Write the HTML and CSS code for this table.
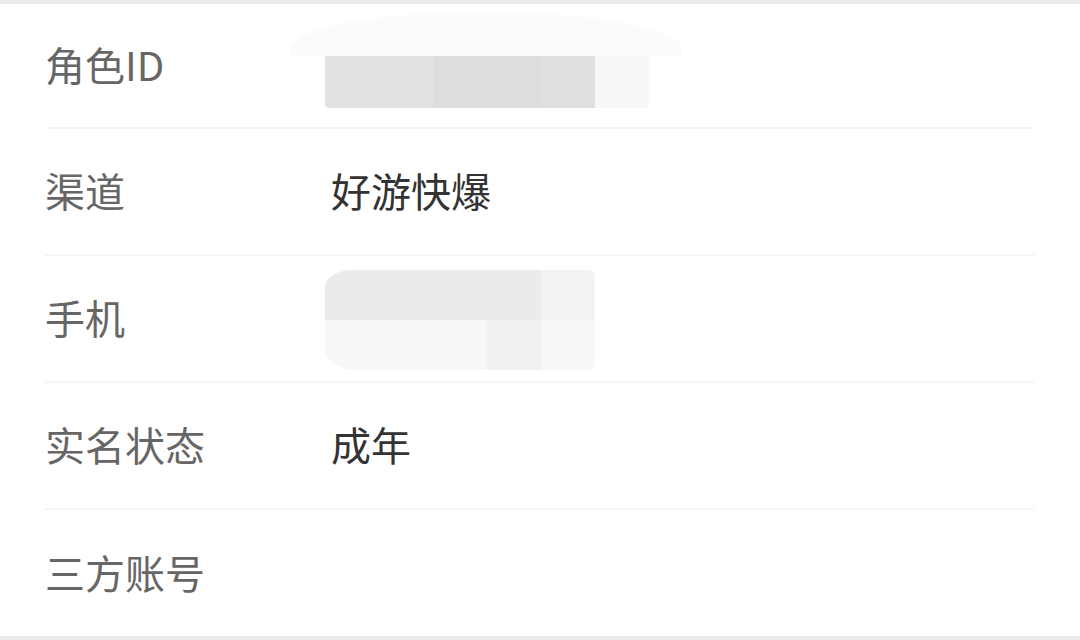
FILE: index.html
```html
<!DOCTYPE html>
<html lang="zh-CN">
<head>
    <meta charset="UTF-8">
    <meta name="viewport" content="width=device-width, initial-scale=1.0">
    <title>账号信息</title>
    <link rel="stylesheet" href="styles.css">
</head>
<body>
    <div class="page">
        <div class="list">
            <div class="row first">
                <div class="label">角色ID</div>
                <div class="value">
                    <div class="mask mask-id">
                        <div class="haze"></div>
                        <div class="cells">
                            <span class="c1"></span>
                            <span class="c2"></span>
                            <span class="c3"></span>
                            <span class="c4"></span>
                        </div>
                    </div>
                </div>
            </div>
            <div class="row">
                <div class="label">渠道</div>
                <div class="value">好游快爆</div>
            </div>
            <div class="row">
                <div class="label">手机</div>
                <div class="value">
                    <div class="mask mask-phone">
                        <div class="band top">
                            <span></span><span></span><span></span><span></span><span class="lite"></span>
                        </div>
                        <div class="band bottom">
                            <span></span><span></span><span></span><span class="dim"></span><span></span>
                        </div>
                    </div>
                </div>
            </div>
            <div class="row">
                <div class="label">实名状态</div>
                <div class="value">成年</div>
            </div>
            <div class="row last">
                <div class="label">三方账号</div>
                <div class="value"></div>
            </div>
        </div>
    </div>
</body>
</html>
```

FILE: styles.css
```css
html, body {
    margin: 0;
    padding: 0;
    background: #fff;
}
body {
    font-family: "Noto Sans CJK SC", "Noto Sans", sans-serif;
}
.page {
    height: 640px;
    box-sizing: border-box;
    border-top: 4px solid #ebebeb;
    border-bottom: 4px solid #ebebeb;
}
.list {
    margin: 0 46px 0 45px;
}
.row {
    display: flex;
    align-items: center;
    height: 125px;
    box-sizing: border-box;
    padding-bottom: 4px;
    border-bottom: 2px solid #f5f5f5;
}
.row {
    height: 127px;
}
.row.first {
    height: 125px;
}
.row.last {
    border-bottom: none;
}
.label {
    width: 286px;
    font-size: 40px;
    line-height: 1;
    color: #666;
}
.value {
    font-size: 40px;
    line-height: 1;
    color: #333;
}

/* blurred-out values */
.mask {
    position: relative;
    margin-left: -6px;
}
.mask-id {
    width: 324px;
    height: 52px;
    margin-top: 37px;
}
.mask-id .haze {
    position: absolute;
    left: -34px;
    top: -44px;
    width: 390px;
    height: 44px;
    background: #fbfbfb;
    border-radius: 60% 60% 0 0 / 100% 100% 0 0;
}
.mask-id .cells {
    display: flex;
    height: 52px;
}
.mask-id .cells span {
    display: block;
    height: 100%;
}
.mask-id .c1 {
    width: 108px;
    background: #e2e2e2;
    border-radius: 0 0 0 4px;
}
.mask-id .c2 {
    width: 108px;
    background: #dddddd;
}
.mask-id .c3 {
    width: 54px;
    background: #e0e0e0;
}
.mask-id .c4 {
    width: 54px;
    background: #f8f8f8;
}
.mask-phone {
    width: 270px;
    height: 100px;
    margin-top: 6px;
    border-radius: 28px 6px 4px 30px / 16px 6px 10px 22px;
    overflow: hidden;
}
.band {
    display: flex;
    height: 50%;
}
.band span {
    flex: 1;
}
.band.top span {
    background: #ebebeb;
}
.band.top span.lite {
    background: #f3f3f3;
}
.band.bottom span {
    background: #f7f7f7;
}
.band.bottom span.dim {
    background: #f1f1f1;
}
```
